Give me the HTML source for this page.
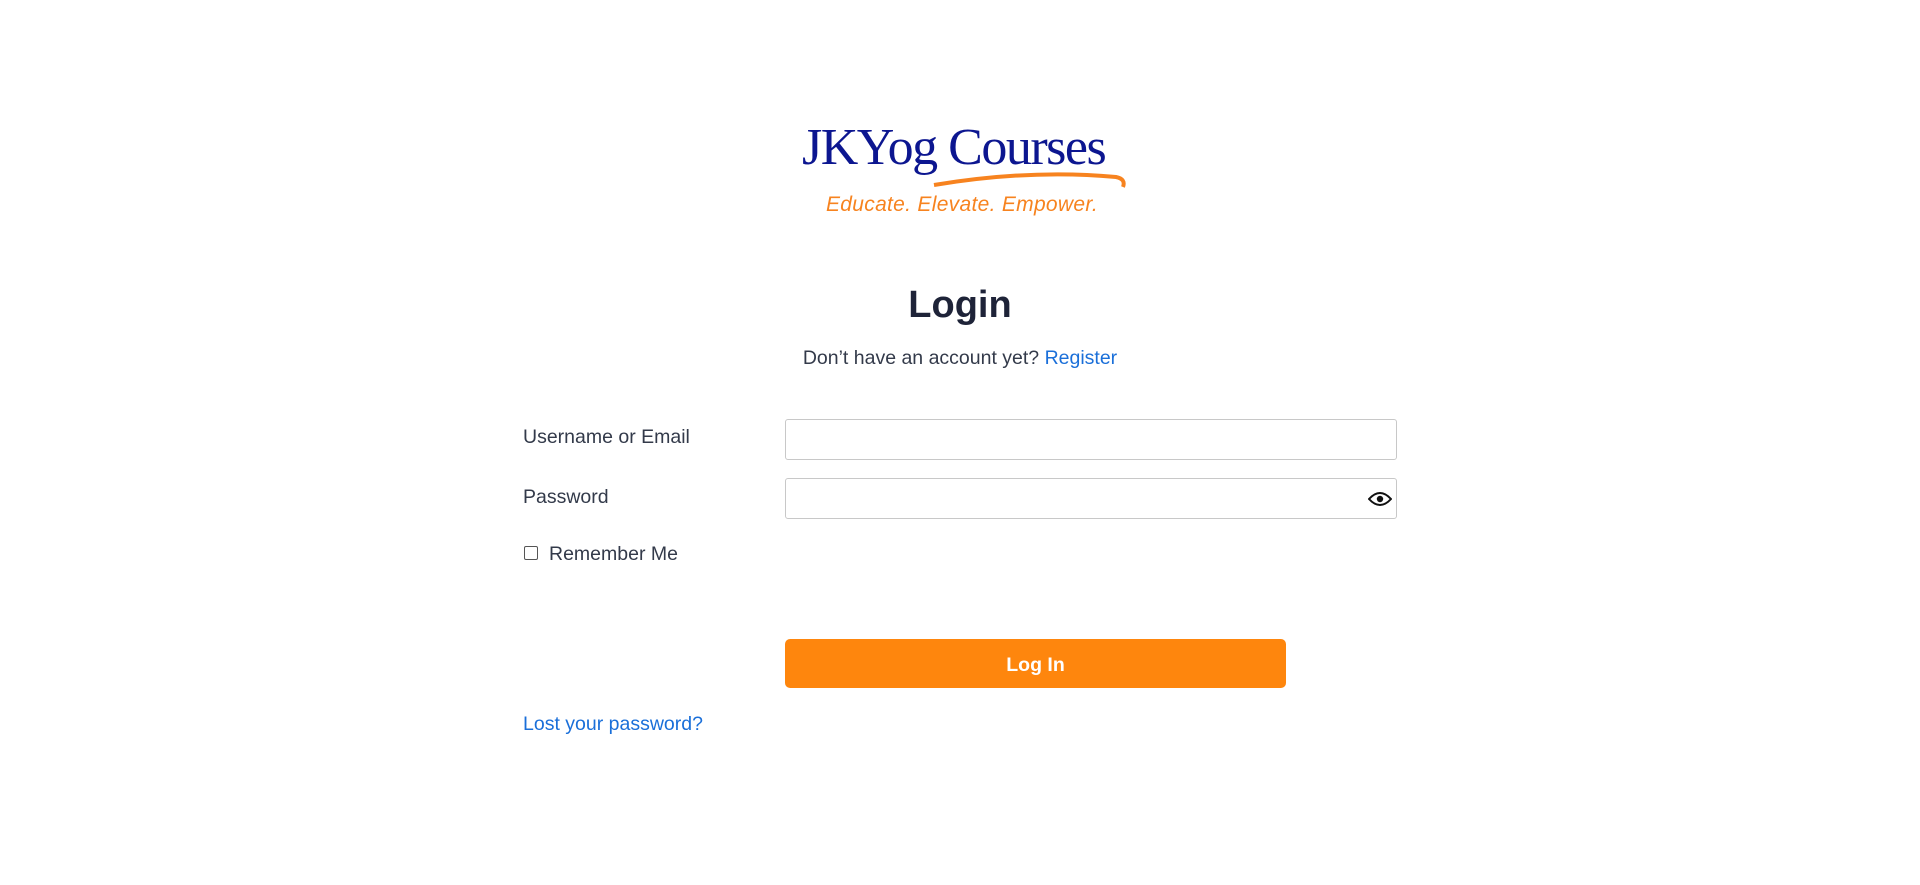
<!DOCTYPE html>
<html><head><meta charset="utf-8"><style>
body{margin:0;width:1920px;height:885px;background:#fff;font-family:"Liberation Sans",sans-serif;position:relative;overflow:hidden}
.a{position:absolute}
.logo{left:802px;top:118px;font-family:"Liberation Serif",serif;font-size:52px;color:#0c1690;letter-spacing:-1.5px;white-space:nowrap}
.tag{left:826px;top:193px;font-style:italic;font-size:21px;color:#f7831f;white-space:nowrap;letter-spacing:0.3px}
h1{position:absolute;margin:0;left:0;width:1920px;text-align:center;top:284px;font-size:38px;color:#1e2338;font-weight:bold}
.sub{left:0;width:1920px;text-align:center;top:347px;font-size:19.5px;color:#333a4a}
.lbl{font-size:19.5px;color:#333a4a;left:523px}
a{color:#1a6fd9;text-decoration:none}
.in{left:785px;width:612px;height:41px;border:1px solid #c8c8c8;border-radius:3px;box-sizing:border-box}
.btn{left:785px;top:639px;width:501px;height:49px;background:#fe860d;border-radius:5px;color:#fff;font-weight:bold;font-size:19.5px;text-align:center;line-height:52px}
</style></head><body>
<div class="a logo">JKYog Courses</div>
<svg class="a" style="left:930px;top:165px" width="200" height="25"><path d="M4 20 Q100 4 186 12 Q196 14 193 22" stroke="#f7831f" stroke-width="4" fill="none"/></svg>
<div class="a tag">Educate. Elevate. Empower.</div>
<h1>Login</h1>
<div class="a sub">Don’t have an account yet? <a>Register</a></div>
<div class="a lbl" style="top:426px">Username or Email</div>
<div class="a in" style="top:419px"></div>
<div class="a lbl" style="top:486px">Password</div>
<div class="a in" style="top:478px"></div>
<svg class="a" style="left:1368px;top:489px" width="24" height="20" viewBox="0 0 24 20"><path d="M1 10 Q12 -2 23 10 Q12 22 1 10Z" fill="none" stroke="#111" stroke-width="2"/><circle cx="12" cy="10" r="3.2" fill="#111"/></svg>
<div class="a" style="left:524px;top:546px;width:12px;height:12px;border:1.5px solid #555;border-radius:2px"></div>
<div class="a lbl" style="top:543px;left:549px">Remember Me</div>
<div class="a btn">Log In</div>
<div class="a lbl" style="top:713px"><a>Lost your password?</a></div>
</body></html>
